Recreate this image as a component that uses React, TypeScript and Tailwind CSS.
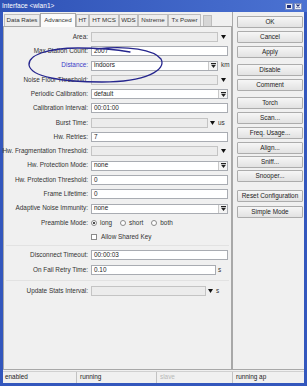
import React from 'react'

type Row =
  | { label: string; kind: 'text'; value: string; w?: number; unit?: string; blue?: boolean }
  | { label: string; kind: 'combo'; value: string; w?: number; unit?: string; blue?: boolean }
  | { label: string; kind: 'off'; w?: number; unit?: string; blue?: boolean }

const rowsTop: Row[] = [
  { label: 'Area:', kind: 'off' },
  { label: 'Max Station Count:', kind: 'text', value: '2007' },
  { label: 'Distance:', kind: 'combo', value: 'indoors', w: 127, unit: 'km', blue: true },
  { label: 'Noise Floor Threshold:', kind: 'off' },
  { label: 'Periodic Calibration:', kind: 'combo', value: 'default' },
  { label: 'Calibration Interval:', kind: 'text', value: '00:01:00' },
  { label: 'Burst Time:', kind: 'off', w: 117, unit: 'us' },
  { label: 'Hw. Retries:', kind: 'text', value: '7' },
  { label: 'Hw. Fragmentation Threshold:', kind: 'off' },
  { label: 'Hw. Protection Mode:', kind: 'combo', value: 'none' },
  { label: 'Hw. Protection Threshold:', kind: 'text', value: '0' },
  { label: 'Frame Lifetime:', kind: 'text', value: '0' },
  { label: 'Adaptive Noise Immunity:', kind: 'combo', value: 'none' },
]

const buttons: { label: string; mt: number }[] = [
  { label: 'OK', mt: 4 },
  { label: 'Cancel', mt: 3 },
  { label: 'Apply', mt: 3 },
  { label: 'Disable', mt: 6 },
  { label: 'Comment', mt: 3 },
  { label: 'Torch', mt: 6 },
  { label: 'Scan...', mt: 3 },
  { label: 'Freq. Usage...', mt: 3 },
  { label: 'Align...', mt: 3 },
  { label: 'Sniff...', mt: 2 },
  { label: 'Snooper...', mt: 2 },
  { label: 'Reset Configuration', mt: 8 },
  { label: 'Simple Mode', mt: 4 },
]

const tabs = [
  { label: 'Data Rates', w: 36 },
  { label: 'Advanced', w: 36, active: true },
  { label: 'HT', w: 13 },
  { label: 'HT MCS', w: 30 },
  { label: 'WDS', w: 19 },
  { label: 'Nstreme', w: 30 },
  { label: 'Tx Power', w: 33 },
]

function ComboIcon() {
  return (
    <svg width="5" height="5" viewBox="0 0 5 5">
      <rect x="0" y="0" width="5" height="1" fill="#222" />
      <polygon points="0,1.8 5,1.8 2.5,5" fill="#222" />
    </svg>
  )
}

function DownArrow() {
  return (
    <svg width="5" height="4" viewBox="0 0 5 4">
      <polygon points="0,0 5,0 2.5,4" fill="#111" />
    </svg>
  )
}

function Label({ text, blue }: { text: string; blue?: boolean }) {
  return (
    <div
      className={`w-[84px] shrink-0 mr-[3px] text-right whitespace-nowrap flex justify-end ${
        blue ? 'text-[#3a3ac8]' : 'text-[#333]'
      }`}
    >
      {text}
    </div>
  )
}

function FieldRow({ row }: { row: Row }) {
  const w = row.w ?? (row.kind === 'off' ? 127 : 137)
  return (
    <div className="flex items-center h-[10px]">
      <Label text={row.label} blue={row.blue} />
      <div
        style={{ width: w }}
        className={`h-[10px] flex items-stretch border ${
          row.kind === 'off' ? 'bg-[#ececec] border-[#c4c4c4]' : 'bg-white border-[#a9acb2]'
        }`}
      >
        <div className="flex-1 flex items-center px-[2px] text-[#222] whitespace-nowrap overflow-hidden">
          {row.kind !== 'off' ? row.value : ''}
        </div>
        {row.kind === 'combo' && (
          <div className="w-[9px] border-l border-[#c8c8c8] bg-[#f4f4f4] flex items-center justify-center">
            <ComboIcon />
          </div>
        )}
      </div>
      {row.kind === 'off' && (
        <div className={`${row.unit ? 'w-[8px]' : 'w-[10px]'} flex items-center justify-center`}>
          <DownArrow />
        </div>
      )}
      {row.unit && (
        <div className={`${row.kind === 'combo' ? 'ml-[3px]' : 'ml-[2px]'} text-[#333]`}>{row.unit}</div>
      )}
    </div>
  )
}

function Radio({ on, label }: { on?: boolean; label: string }) {
  return (
    <div className="flex items-center gap-[3px] mr-[8px]">
      <div className="w-[6px] h-[6px] rounded-full border border-[#8a8a8a] bg-white flex items-center justify-center">
        {on && <div className="w-[2px] h-[2px] rounded-full bg-[#111]" />}
      </div>
      <span className="text-[#333]">{label}</span>
    </div>
  )
}

export default function App() {
  return (
    <div className="relative w-[307px] h-[386px] bg-[#3357bd] flex flex-col font-['Liberation_Sans',Arial,sans-serif] text-[6.4px] leading-none overflow-hidden">
      {/* title bar */}
      <div className="h-[12px] flex items-center pl-[2px] pr-[5px] bg-gradient-to-r from-[#2f52b6] to-[#4b72d2]">
        <span className="text-white text-[6.6px]">Interface &lt;wlan1&gt;</span>
        <div className="ml-auto flex gap-[1px]">
          <div className="w-[8px] h-[7px] bg-[#e8ecf5] border border-[#7a8cc0] flex items-center justify-center">
            <div className="w-[4px] h-[3px] border border-[#1b2d7a] border-t-2" />
          </div>
          <div className="w-[8px] h-[7px] bg-[#e8ecf5] border border-[#7a8cc0] flex items-center justify-center">
            <svg width="4" height="4" viewBox="0 0 4 4">
              <path d="M0.5 0.5 L3.5 3.5 M3.5 0.5 L0.5 3.5" stroke="#1b2d7a" strokeWidth="1.1" />
            </svg>
          </div>
        </div>
      </div>

      <div className="flex-1 mx-[3px] mb-[3px] bg-[#f0f0f0] flex flex-col">
        <div className="flex flex-1">
          {/* left: tabs + form */}
          <div className="w-[229px] flex flex-col">
            <div className="h-[14px] flex items-end pl-[1px]">
              {tabs.map((t) => (
                <div
                  key={t.label}
                  style={{ width: t.w }}
                  className={`flex items-center justify-center whitespace-nowrap border border-b-0 text-[6.2px] text-[#333] ${
                    t.active
                      ? 'h-[14px] bg-[#fbfbfb] border-[#a8a8a8] relative -mb-px pb-px z-10'
                      : 'h-[12px] bg-[#ededed] border-[#bdbdbd]'
                  }`}
                >
                  {t.label}
                </div>
              ))}
              <div className="ml-[2px] w-[9px] h-[11px] bg-[#d6d6d6] border border-[#bdbdbd] border-b-0" />
            </div>
            <div className="flex-1 border border-[#a8a8a8] bg-[#f0f0f0] pt-[5px] flex flex-col">
              <div className="flex flex-col gap-[4.3px]">
                {rowsTop.map((r) => (
                  <FieldRow key={r.label} row={r} />
                ))}
                <div className="flex items-center h-[10px]">
                  <Label text="Preamble Mode:" />
                  <Radio on label="long" />
                  <Radio label="short" />
                  <Radio label="both" />
                </div>
                <div className="flex items-center h-[10px]">
                  <div className="w-[87px]" />
                  <div className="w-[6px] h-[6px] border border-[#8a8a8a] bg-white mr-[4px]" />
                  <span className="text-[#333]">Allow Shared Key</span>
                </div>
              </div>
              <div className="mt-[3px] mx-[2px] border-t border-[#e2e2e2]" />
              <div className="flex flex-col gap-[4.6px] mt-[4px]">
                <FieldRow row={{ label: 'Disconnect Timeout:', kind: 'text', value: '00:00:03' }} />
                <FieldRow row={{ label: 'On Fail Retry Time:', kind: 'text', value: '0.10', w: 125, unit: 's' }} />
              </div>
              <div className="mt-[5px] mx-[2px] border-t border-[#e2e2e2]" />
              <div className="mt-[5px]">
                <FieldRow row={{ label: 'Update Stats Interval:', kind: 'off', w: 115, unit: 's' }} />
              </div>
            </div>
          </div>

          {/* right: buttons */}
          <div className="flex-1 border-l border-b border-[#a8a8a8] flex flex-col pl-[4px] pr-[1px]">
            {buttons.map((b) => (
              <div
                key={b.label}
                style={{ marginTop: b.mt }}
                className="h-[12px] flex items-center justify-center rounded-[1px] border border-[#acacac] bg-gradient-to-b from-[#f6f6f6] to-[#e2e2e2] text-[#222] whitespace-nowrap"
              >
                {b.label}
              </div>
            ))}
          </div>
        </div>

        {/* status bar */}
        <div className="h-[12px] flex text-[#222] border-t border-[#d0d0d0] mt-[1px]">
          <div className="w-[74px] flex items-center px-[2px] border-r border-[#c2c2c2]">enabled</div>
          <div className="w-[80px] flex items-center px-[3px] border-r border-[#c2c2c2]">running</div>
          <div className="w-[76px] flex items-center px-[3px] border-r border-[#c2c2c2] text-[#b8b8b8]">slave</div>
          <div className="flex-1 flex items-center px-[3px]">running ap</div>
        </div>
      </div>

      {/* hand-drawn annotation */}
      <svg className="absolute inset-0 pointer-events-none" width="307" height="386" viewBox="0 0 307 386">
        <path
          d="M 96 49 C 128 45, 154 50, 161 59 C 167 70, 146 82, 102 82 C 62 82, 31 77, 29 65 C 28 55, 48 48, 78 48 C 96 48, 114 49, 130 52"
          fill="none"
          stroke="#26268e"
          strokeWidth="1.3"
          strokeLinecap="round"
        />
      </svg>
    </div>
  )
}
